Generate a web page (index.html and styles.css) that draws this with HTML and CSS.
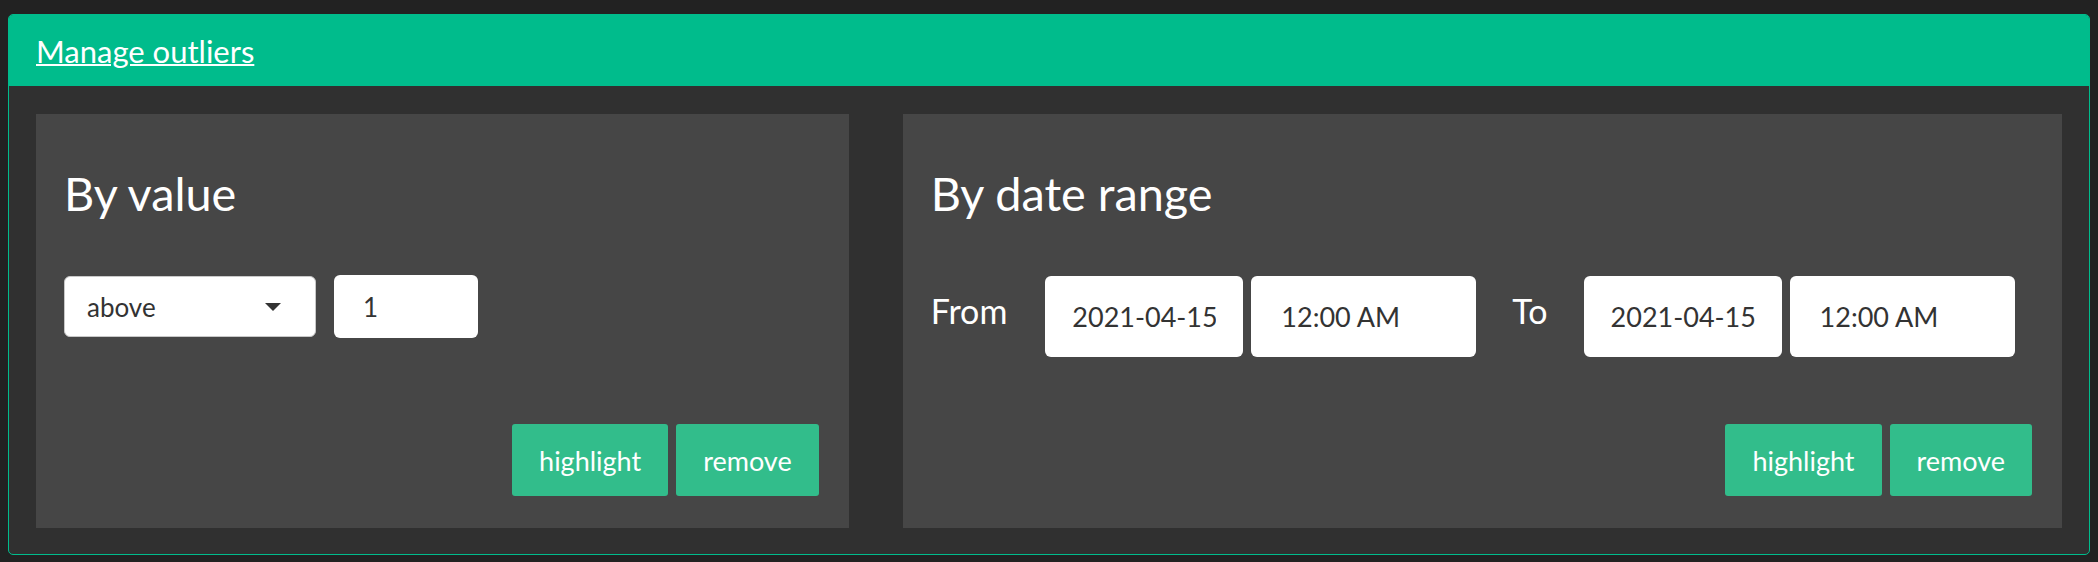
FILE: index.html
```html
<!DOCTYPE html>
<html lang="en">
<head>
<meta charset="utf-8">
<title>Manage outliers</title>
<link rel="stylesheet" href="styles.css">
</head>
<body>
<div class="panel">
  <div class="panel-heading">
    <a class="panel-title" href="#">Manage outliers</a>
  </div>
  <div class="panel-body">
    <div class="row">
      <div class="col col-5">
        <div class="well">
          <h3 class="well-title">By value</h3>
          <div class="controls">
            <div class="select">
              <span>above</span>
              <svg class="caret" width="16" height="8" viewBox="0 0 16 8"><path d="M0 0 H16 L8 8 Z" fill="#333"/></svg>
            </div>
            <input class="field field-num" type="text" value="1">
          </div>
          <div class="actions">
            <button class="btn">highlight</button>
            <button class="btn">remove</button>
          </div>
        </div>
      </div>
      <div class="col col-7">
        <div class="well">
          <h3 class="well-title">By date range</h3>
          <div class="date-row">
            <span class="range-label">From</span>
            <input class="field field-date" type="text" value="2021-04-15">
            <input class="field field-time" type="text" value="12:00 AM">
            <span class="range-label range-label-to">To</span>
            <input class="field field-date" type="text" value="2021-04-15">
            <input class="field field-time" type="text" value="12:00 AM">
          </div>
          <div class="actions">
            <button class="btn">highlight</button>
            <button class="btn">remove</button>
          </div>
        </div>
      </div>
    </div>
  </div>
</div>
</body>
</html>
```
FILE: styles.css
```css
* {
  box-sizing: border-box;
}

body {
  margin: 0;
  padding: 14px 8px 0;
  background: #222222;
  font-family: Lato, "Liberation Sans", sans-serif;
  color: #ffffff;
}

.panel {
  border: 1px solid #00bc8c;
  border-radius: 5px;
  background: #303030;
  overflow: hidden;
}

.panel-heading {
  height: 71px;
  background: #00bc8c;
  display: flex;
  align-items: center;
  padding: 0 27px;
}

.panel-title {
  font-size: 31px;
  color: #ffffff;
  text-decoration: underline;
  text-decoration-thickness: 2px;
}

.panel-body {
  padding: 28px 27px 26px;
}

.row {
  display: flex;
  margin: 0 -27px;
}

.col {
  display: flex;
  padding: 0 27px;
}

.col-5 {
  width: 41.6667%;
}

.col-7 {
  width: 58.3333%;
}

.well {
  flex: 1;
  display: flex;
  flex-direction: column;
  background: #464646;
  padding: 54px 30px 32px 28px;
}

.well-title {
  margin: 0 0 56px;
  font-size: 46.8px;
  font-weight: 400;
  line-height: 1.1;
}

.controls {
  display: flex;
  align-items: flex-start;
  gap: 18px;
}

.select {
  width: 252px;
  height: 61px;
  margin-top: 1px;
  display: flex;
  align-items: center;
  justify-content: space-between;
  padding: 0 34px 0 22px;
  background: #ffffff;
  border: 1px solid #c8c8c8;
  border-radius: 6px;
  color: #333333;
  font-size: 26px;
}

.caret {
  display: block;
}

.field {
  background: #ffffff;
  border: 0;
  border-radius: 6px;
  color: #333333;
  font-family: inherit;
  outline: none;
}

.field-num {
  width: 144px;
  height: 63px;
  padding: 0 29px;
  font-size: 26px;
}

.date-row {
  display: flex;
  align-items: flex-start;
  margin: 1px 0 67px;
}

.range-label {
  font-size: 34px;
  line-height: 1.2;
  margin: 15px 38px 0 0;
}

.range-label-to {
  margin-left: 36px;
  margin-right: 36px;
}

.field-date {
  width: 198px;
  height: 81px;
  padding: 0 27px;
  font-size: 27px;
}

.field-time {
  width: 225px;
  height: 81px;
  margin-left: 8px;
  padding: 0 30px;
  font-size: 27px;
}

.actions {
  margin-top: auto;
  display: flex;
  justify-content: flex-end;
  gap: 8px;
}

.btn {
  height: 72px;
  padding: 0 27px;
  background: #32bd8b;
  border: 0;
  border-radius: 3px;
  color: #ffffff;
  font-family: inherit;
  font-size: 27px;
}
```
